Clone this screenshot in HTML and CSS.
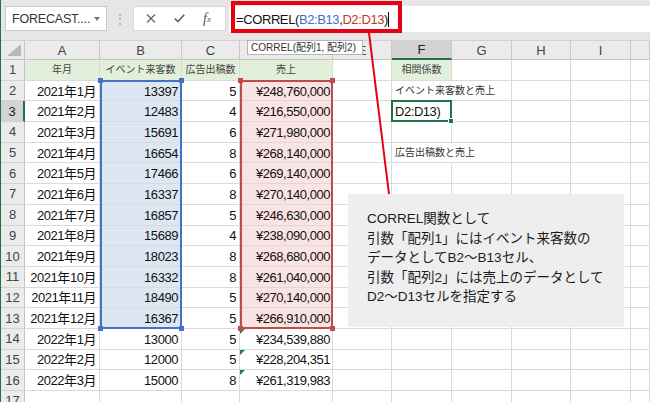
FILE: index.html
```html
<!DOCTYPE html>
<html lang="ja">
<head>
<meta charset="utf-8">
<title>CORREL</title>
<link rel="stylesheet" href="styles.css">
</head>
<body>
<div class="app">
  <div class="bar">
    <div class="namebox"><span>FORECAST....</span><span class="caret"></span></div>
    <div class="grip">⋮</div>
    <div class="fbox">
      <span class="ic"><svg width="10" height="9" viewBox="0 0 10 9"><path d="M1 0.5L9 8.5M9 0.5L1 8.5" stroke="#666" stroke-width="1.3" fill="none"/></svg></span>
      <span class="ic"><svg width="11" height="9" viewBox="0 0 11 9"><path d="M0.8 4.6L4 7.6L10.2 0.8" stroke="#666" stroke-width="1.7" fill="none"/></svg></span>
      <span class="ic fx">f<small>x</small></span>
    </div>
    <div class="formula"><span>=CORREL(</span><span class="rb">B2:B13</span><span>,</span><span class="rd">D2:D13</span><span>)</span><span class="cursor"></span></div>
  </div>

  <div class="sheet">
    <div class="corner"></div><div class="ch">A</div><div class="ch">B</div><div class="ch">C</div><div class="ch">D</div><div class="ch">E</div><div class="ch act-c">F</div><div class="ch">G</div><div class="ch">H</div><div class="ch">I</div><div class="ch"></div>

    <div class="rh">1</div><div class="c hd">年月</div><div class="c hd">イベント来客数</div><div class="c hd">広告出稿数</div><div class="c hd">売上</div><div class="c"></div><div class="c hd">相関係数</div><div class="c"></div><div class="c"></div><div class="c"></div><div class="c"></div>

    <div class="rh">2</div><div class="c r">2021年1月</div><div class="c r sb">13397</div><div class="c r">5</div><div class="c r sd">¥248,760,000</div><div class="c"></div><div class="c t ov">イベント来客数と売上</div><div class="c"></div><div class="c"></div><div class="c"></div><div class="c"></div>

    <div class="rh act-r">3</div><div class="c r">2021年2月</div><div class="c r sb">12483</div><div class="c r">4</div><div class="c r sd">¥216,550,000</div><div class="c"></div><div class="c ov">D2:D13)</div><div class="c"></div><div class="c"></div><div class="c"></div><div class="c"></div>

    <div class="rh">4</div><div class="c r">2021年3月</div><div class="c r sb">15691</div><div class="c r">6</div><div class="c r sd">¥271,980,000</div><div class="c"></div><div class="c"></div><div class="c"></div><div class="c"></div><div class="c"></div><div class="c"></div>

    <div class="rh">5</div><div class="c r">2021年4月</div><div class="c r sb">16654</div><div class="c r">8</div><div class="c r sd">¥268,140,000</div><div class="c"></div><div class="c t ov">広告出稿数と売上</div><div class="c"></div><div class="c"></div><div class="c"></div><div class="c"></div>

    <div class="rh">6</div><div class="c r">2021年5月</div><div class="c r sb">17466</div><div class="c r">6</div><div class="c r sd">¥269,140,000</div><div class="c"></div><div class="c"></div><div class="c"></div><div class="c"></div><div class="c"></div><div class="c"></div>

    <div class="rh">7</div><div class="c r">2021年6月</div><div class="c r sb">16337</div><div class="c r">8</div><div class="c r sd">¥270,140,000</div><div class="c"></div><div class="c"></div><div class="c"></div><div class="c"></div><div class="c"></div><div class="c"></div>

    <div class="rh">8</div><div class="c r">2021年7月</div><div class="c r sb">16857</div><div class="c r">5</div><div class="c r sd">¥246,630,000</div><div class="c"></div><div class="c"></div><div class="c"></div><div class="c"></div><div class="c"></div><div class="c"></div>

    <div class="rh">9</div><div class="c r">2021年8月</div><div class="c r sb">15689</div><div class="c r">4</div><div class="c r sd">¥238,090,000</div><div class="c"></div><div class="c"></div><div class="c"></div><div class="c"></div><div class="c"></div><div class="c"></div>

    <div class="rh">10</div><div class="c r">2021年9月</div><div class="c r sb">18023</div><div class="c r">8</div><div class="c r sd">¥268,680,000</div><div class="c"></div><div class="c"></div><div class="c"></div><div class="c"></div><div class="c"></div><div class="c"></div>

    <div class="rh">11</div><div class="c r">2021年10月</div><div class="c r sb">16332</div><div class="c r">8</div><div class="c r sd">¥261,040,000</div><div class="c"></div><div class="c"></div><div class="c"></div><div class="c"></div><div class="c"></div><div class="c"></div>

    <div class="rh">12</div><div class="c r">2021年11月</div><div class="c r sb">18490</div><div class="c r">5</div><div class="c r sd">¥270,140,000</div><div class="c"></div><div class="c"></div><div class="c"></div><div class="c"></div><div class="c"></div><div class="c"></div>

    <div class="rh">13</div><div class="c r">2021年12月</div><div class="c r sb">16367</div><div class="c r">5</div><div class="c r sd">¥266,910,000</div><div class="c"></div><div class="c"></div><div class="c"></div><div class="c"></div><div class="c"></div><div class="c"></div>

    <div class="rh">14</div><div class="c r">2022年1月</div><div class="c r">13000</div><div class="c r">5</div><div class="c r err">¥234,539,880</div><div class="c"></div><div class="c"></div><div class="c"></div><div class="c"></div><div class="c"></div><div class="c"></div>

    <div class="rh">15</div><div class="c r">2022年2月</div><div class="c r">12000</div><div class="c r">5</div><div class="c r err">¥228,204,351</div><div class="c"></div><div class="c"></div><div class="c"></div><div class="c"></div><div class="c"></div><div class="c"></div>

    <div class="rh">16</div><div class="c r">2022年3月</div><div class="c r">15000</div><div class="c r">8</div><div class="c r err">¥261,319,983</div><div class="c"></div><div class="c"></div><div class="c"></div><div class="c"></div><div class="c"></div><div class="c"></div>

    <div class="rh">17</div><div class="c"></div><div class="c"></div><div class="c"></div><div class="c"></div><div class="c"></div><div class="c"></div><div class="c"></div><div class="c"></div><div class="c"></div><div class="c"></div>

    <div class="overlay">
      <div class="sel selB"><i class="h tl"></i><i class="h tr"></i><i class="h bl"></i><i class="h br"></i></div>
      <div class="sel selD"><i class="h tl"></i><i class="h tr"></i><i class="h bl"></i><i class="h br"></i></div>
      <div class="selF"><i class="fh"></i></div>
    </div>
  </div>

  <div class="tip">CORREL(配列1, 配列2)</div>
  <div class="redbox"></div>
  <svg class="arrow" width="649" height="402" viewBox="0 0 649 402"><line x1="368" y1="33" x2="388" y2="194" stroke="#e60012" stroke-width="2"/></svg>
  <div class="callout">
    <p>CORREL関数として</p>
    <p>引数「配列1」にはイベント来客数の</p>
    <p>データとしてB2～B13セル、</p>
    <p>引数「配列2」には売上のデータとして</p>
    <p>D2～D13セルを指定する</p>
  </div>
</div>
</body>
</html>
```

FILE: styles.css
```css
* { box-sizing: border-box; }
html, body { margin: 0; padding: 0; }
body {
  width: 650px;
  height: 402px;
  overflow: hidden;
  background: #fff;
  font-family: "Liberation Sans", "Noto Sans CJK JP", sans-serif;
  color: #111;
}
.app {
  position: relative;
  width: 650px;
  height: 402px;
  border-left: 1px solid #217346;
  overflow: hidden;
}

/* toolbar */
.bar {
  height: 41px;
  background: #e6e6e6;
  border-bottom: 1px solid #d2d2d2;
  display: flex;
  align-items: flex-start;
  padding-top: 6px;
}
.namebox {
  margin-left: 4px;
  width: 102px;
  height: 25px;
  background: #fff;
  border: 1px solid #c8c8c8;
  display: flex;
  align-items: center;
  justify-content: space-between;
  padding: 0 6px 0 6px;
  font-size: 12.5px;
  letter-spacing: -0.2px;
  color: #333;
}
.caret {
  width: 0;
  height: 0;
  border-left: 3px solid transparent;
  border-right: 3px solid transparent;
  border-top: 4px solid #777;
}
.grip {
  width: 26px;
  height: 25px;
  display: flex;
  align-items: center;
  justify-content: center;
  color: #aaa;
  font-size: 14px;
}
.fbox {
  width: 93px;
  height: 25px;
  background: #fff;
  border: 1px solid #dadada;
  display: flex;
  align-items: center;
  padding-left: 3px;
}
.ic {
  width: 28px;
  display: flex;
  align-items: center;
  justify-content: center;
}
.fx {
  font-family: "Liberation Serif", serif;
  font-style: italic;
  font-size: 14px;
  color: #555;
}
.fx small { font-size: 9px; }
.formula {
  flex: 1;
  margin-left: 3px;
  height: 26px;
  background: #fff;
  display: flex;
  align-items: center;
  padding-left: 7px;
  font-size: 13px;
  letter-spacing: -0.4px;
  color: #111;
}
.rb { color: #3d6fc4; }
.rd { color: #c0392b; }
.cursor {
  width: 0;
  height: 15px;
  border-left: 1px solid #000;
}

/* sheet */
.sheet {
  position: relative;
  display: grid;
  grid-template-columns: 24px 75px 82px 58px 93px 59px 60px 60px 59px 60px 19px;
  grid-template-rows: 19px repeat(17, 20.69px);
}
.corner {
  background: #ebebeb;
  border-right: 1px solid #c4c4c4;
  border-bottom: 1px solid #c4c4c4;
  position: relative;
}
.corner::after {
  content: "";
  position: absolute;
  right: 3px;
  bottom: 3px;
  width: 14px;
  height: 12px;
  background: #b9b9b9;
  clip-path: polygon(100% 0, 100% 100%, 0 100%);
}
.ch {
  background: #ebebeb;
  border-right: 1px solid #c8c8c8;
  border-bottom: 1px solid #c4c4c4;
  display: flex;
  align-items: center;
  justify-content: center;
  font-size: 13px;
  color: #444;
}
.act-c {
  background: #d3d3d3;
  border-bottom: 2px solid #217346;
  color: #222;
}
.rh {
  background: #ebebeb;
  border-right: 1px solid #c4c4c4;
  border-bottom: 1px solid #d2d2d2;
  display: flex;
  align-items: center;
  justify-content: center;
  font-size: 13px;
  color: #444;
}
.act-r {
  background: #d3d3d3;
  border-right: 2px solid #217346;
  color: #222;
}
.c {
  border-right: 1px solid #dadada;
  border-bottom: 1px solid #dadada;
  font-size: 13px;
  letter-spacing: -0.45px;
  white-space: nowrap;
  display: flex;
  align-items: center;
  padding: 1px 3px 0 3px;
  line-height: 1;
  position: relative;
  color: #111;
}
.r { justify-content: flex-end; }
.hd {
  background: #e2efda;
  justify-content: center;
  font-size: 10px;
  letter-spacing: 0;
  color: #444;
}
.sb { background: #dde7f4; }
.sd { background: #f9e3e3; padding-right: 2px; }
.err { padding-right: 2px; }
.err::before {
  content: "";
  position: absolute;
  left: 0;
  top: 0;
  border-top: 5px solid #1e7d3f;
  border-right: 5px solid transparent;
}
.t {
  font-size: 10px;
  letter-spacing: 0;
  color: #333;
}
.ov { border-right-color: transparent; overflow: visible; }

/* overlay selections */
.overlay {
  position: absolute;
  inset: 0;
  display: grid;
  grid-template-columns: 24px 75px 82px 58px 93px 59px 60px 60px 59px 60px 19px;
  grid-template-rows: 19px repeat(17, 20.69px);
  pointer-events: none;
}
.sel { position: relative; margin: -1px 0 0 0; }
.selB { grid-column: 3; grid-row: 3 / 15; border: 2px solid #4472c4; }
.selD { grid-column: 5; grid-row: 3 / 15; border: 2px solid #bf4b4b; }
.h {
  position: absolute;
  width: 5px;
  height: 5px;
}
.selB .h { background: #4472c4; }
.selD .h { background: #bf4b4b; }
.tl { left: -4px; top: -4px; }
.tr { right: -4px; top: -4px; }
.bl { left: -4px; bottom: -4px; }
.br { right: -4px; bottom: -4px; }
.selF {
  grid-column: 7;
  grid-row: 4;
  border: 2px solid #217346;
  margin: -1px 0 0 -1px;
  position: relative;
}
.fh {
  position: absolute;
  right: -4px;
  bottom: -4px;
  width: 6px;
  height: 6px;
  background: #217346;
  border: 1px solid #fff;
}

/* annotations */
.tip {
  position: absolute;
  left: 246px;
  top: 40px;
  width: 116px;
  height: 15px;
  background: #fff;
  border: 1px solid #b5b5b5;
  padding: 0 3px;
  font-size: 10px;
  line-height: 13px;
  color: #333;
  white-space: nowrap;
  overflow: hidden;
}
.redbox {
  position: absolute;
  left: 230px;
  top: 1px;
  width: 171px;
  height: 32px;
  border: 4px solid #e60012;
}
.arrow {
  position: absolute;
  left: 0;
  top: 0;
  pointer-events: none;
}
.callout {
  position: absolute;
  left: 347px;
  top: 194px;
  width: 276px;
  height: 133px;
  background: #eeeeee;
  padding: 15px 0 0 19px;
  font-size: 13.5px;
  line-height: 19.6px;
  color: #1a1a1a;
}
.callout p { margin: 0; white-space: nowrap; }
```
